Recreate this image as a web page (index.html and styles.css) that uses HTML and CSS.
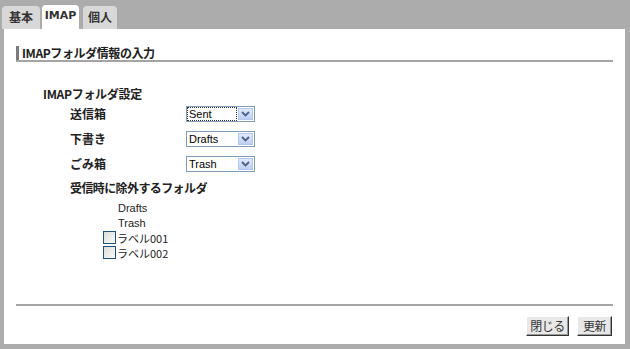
FILE: index.html
```html
<!DOCTYPE html>
<html lang="ja">
<head>
<meta charset="utf-8">
<link rel="stylesheet" href="styles.css">
</head>
<body>
<div class="frame">
  <div class="tabs">
    <div class="tab">基本</div>
    <div class="tab active">IMAP</div>
    <div class="tab">個人</div>
  </div>
  <div class="panel">
    <div class="heading"><span class="heading-text">IMAPフォルダ情報の入力</span></div>
    <div class="section">
      <div class="section-title">IMAPフォルダ設定</div>
      <div class="rows">
        <div class="label">送信箱</div>
        <div class="select focused"><span class="value"><span class="focus">Sent</span></span><span class="arrow"><svg width="9" height="6" viewBox="0 0 9 6"><path d="M1 1 L4.5 4.5 L8 1" fill="none" stroke="#4d6185" stroke-width="1.8"/></svg></span></div>
        <div class="label">下書き</div>
        <div class="select"><span class="value">Drafts</span><span class="arrow"><svg width="9" height="6" viewBox="0 0 9 6"><path d="M1 1 L4.5 4.5 L8 1" fill="none" stroke="#4d6185" stroke-width="1.8"/></svg></span></div>
        <div class="label">ごみ箱</div>
        <div class="select"><span class="value">Trash</span><span class="arrow"><svg width="9" height="6" viewBox="0 0 9 6"><path d="M1 1 L4.5 4.5 L8 1" fill="none" stroke="#4d6185" stroke-width="1.8"/></svg></span></div>
      </div>
      <div class="exclude-title">受信時に除外するフォルダ</div>
      <ul class="folders">
        <li class="folder plain">Drafts</li>
        <li class="folder plain">Trash</li>
        <li class="folder"><span class="check"></span>ラベル001</li>
        <li class="folder"><span class="check"></span>ラベル002</li>
      </ul>
    </div>
    <div class="footer">
      <button class="btn btn-close">閉じる</button>
      <button class="btn btn-update">更新</button>
    </div>
  </div>
</div>
</body>
</html>
```

FILE: styles.css
```css
html, body {
  margin: 0;
  padding: 0;
}
body {
  background: #acacac;
  font-family: "Noto Sans CJK JP", "DejaVu Sans", sans-serif;
  font-size: 12px;
  color: #222;
  width: 630px;
  height: 349px;
  overflow: hidden;
}
.frame {
  padding-top: 5px;
}
.tabs {
  display: flex;
  align-items: flex-end;
  gap: 2px;
  margin-left: 2px;
  height: 24px;
}
.tab {
  height: 23px;
  line-height: 22px;
  padding: 0;
  background: #d8d8d8;
  border-radius: 4px 4px 0 0;
  font-weight: bold;
  font-size: 12px;
  color: #333;
  box-sizing: border-box;
  text-align: center;
}
.tab:first-child { width: 38px; }
.tab.active {
  background: #fff;
  height: 24px;
  width: 37px;
  margin-right: 2px;
  font-size: 11px;
  font-family: "DejaVu Sans", sans-serif;
}
.tab:last-child { width: 34px; }
.panel {
  margin-left: 4px;
  width: 621px;
  height: 315px;
  background: #fff;
  box-sizing: border-box;
  padding: 16px 12px 8px 12px;
  display: flex;
  flex-direction: column;
}
.heading {
  border-bottom: 2px solid #a4a4a4;
  height: 15px;
  line-height: 15px;
}
.heading-text {
  display: inline-block;
  border-left: 3px solid #7c7c7c;
  padding-left: 3px;
  height: 14px;
  line-height: 14px;
  font-weight: bold;
  font-size: 12px;
  letter-spacing: -0.4px;
  color: #222;
}
.section {
  margin-top: 24px;
  padding-left: 27px;
}
.section-title {
  font-weight: bold;
  line-height: 15px;
  height: 15px;
  letter-spacing: -0.3px;
}
.rows {
  display: grid;
  grid-template-columns: 116px 69px;
  grid-auto-rows: 25px;
  align-items: center;
  padding-left: 27px;
}
.label {
  font-weight: bold;
  line-height: 15px;
}
.select {
  display: flex;
  height: 16px;
  border: 1px solid #7f9db9;
  box-sizing: border-box;
  width: 69px;
  background: #fff;
}
.value {
  flex: 1;
  display: flex;
  font-family: "Liberation Sans", sans-serif;
  font-size: 11px;
  line-height: 14px;
  padding-left: 2px;
  color: #000;
}
.focused .value { padding: 1px 1px 1px 1px; line-height: 12px; }
.focus {
  flex: 1;
  height: 12px;
  outline: 1px dotted #333;
  outline-offset: 0;
  padding-left: 1px;
  box-sizing: border-box;
}
.arrow {
  width: 15px;
  margin: 1px;
  background: linear-gradient(#e0e9fd, #bfd0f5);
  border: 1px solid #b3c7ef;
  box-sizing: border-box;
  display: flex;
  align-items: center;
  justify-content: center;
}
.exclude-title {
  margin-top: 4px;
  padding-left: 27px;
  font-weight: bold;
  line-height: 15px;
  letter-spacing: -0.6px;
}
.folders {
  list-style: none;
  margin: 5px 0 0 0;
  padding-left: 60px;
}
.folder {
  display: flex;
  align-items: center;
  height: 15px;
  font-size: 11px;
  color: #222;
}
.folder.plain {
  padding-left: 15px;
  font-family: "Liberation Sans", sans-serif;
}
.check {
  width: 13px;
  height: 13px;
  border: 1px solid #1c5180;
  box-sizing: border-box;
  background: linear-gradient(135deg, #dcdcd7, #fbfbf9);
  margin-right: 1px;
}
.footer {
  margin-top: auto;
  border-top: 2px solid #a4a4a4;
  padding-top: 10px;
  display: flex;
  justify-content: flex-end;
  gap: 8px;
  padding-right: 1px;
}
.btn {
  height: 20px;
  padding: 0;
  white-space: nowrap;
  font-family: "Noto Sans CJK JP", sans-serif;
  font-size: 12px;
  color: #333;
  background: #e8e8e8;
  border: 1px solid;
  border-color: #fff #333 #333 #fff;
  box-shadow: inset -1px -1px 0 #999;
  line-height: 16px;
  letter-spacing: -0.5px;
}
.btn-close { width: 43px; }
.btn-update { width: 35px; }
```
